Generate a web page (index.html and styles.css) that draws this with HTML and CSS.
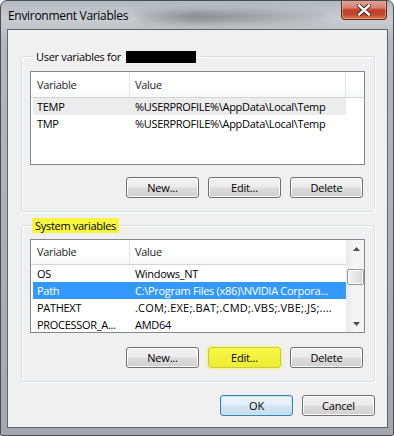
FILE: index.html
```html
<!DOCTYPE html>
<html>
<head>
<meta charset="utf-8">
<link rel="stylesheet" href="styles.css">
</head>
<body>
<div class="window">
  <div class="titlebar">
    <span class="title">Environment Variables</span>
    <div class="glass"></div>
    <div class="close">
      <svg width="14" height="12" viewBox="0 0 14 12">
        <path d="M2 1.5 L12 10.5 M12 1.5 L2 10.5" stroke="#3a1a14" stroke-width="4.2" stroke-linecap="square"/>
        <path d="M2 1.5 L12 10.5 M12 1.5 L2 10.5" stroke="#ffffff" stroke-width="2.4" stroke-linecap="square"/>
      </svg>
    </div>
  </div>
  <div class="client">
    <fieldset class="group group-user">
      <legend class="legend">User variables for <span class="redact"></span></legend>
      <div class="list list-user">
        <div class="lv-main">
          <div class="lv-header">
            <div class="hcol h1">Variable</div>
            <div class="hcol h2">Value</div>
            <div class="hcol hfill"></div>
          </div>
          <div class="row row-hover"><div class="c1">TEMP</div><div class="c2">%USERPROFILE%\AppData\Local\Temp</div></div>
          <div class="row"><div class="c1">TMP</div><div class="c2">%USERPROFILE%\AppData\Local\Temp</div></div>
        </div>
      </div>
      <div class="btnrow btnrow-user">
        <button class="btn">New...</button>
        <button class="btn">Edit...</button>
        <button class="btn">Delete</button>
      </div>
    </fieldset>
    <fieldset class="group group-sys">
      <legend class="legend legend-hl">System variables</legend>
      <div class="list list-sys">
        <div class="lv-main lv-main-sys">
          <div class="lv-header lv-header-sys">
            <div class="hcol h1">Variable</div>
            <div class="hcol h2">Value</div>
          </div>
          <div class="row"><div class="c1">OS</div><div class="c2">Windows_NT</div></div>
          <div class="row row-sel"><div class="c1">Path</div><div class="c2">C:\Program Files (x86)\NVIDIA Corpora...</div></div>
          <div class="row"><div class="c1">PATHEXT</div><div class="c2 wide">.COM;.EXE;.BAT;.CMD;.VBS;.VBE;.JS;....</div></div>
          <div class="row"><div class="c1">PROCESSOR_A...</div><div class="c2">AMD64</div></div>
        </div>
        <div class="scrollbar">
          <div class="sb-btn">
            <svg width="7" height="4" viewBox="0 0 7 4"><path d="M0 4 L3.5 0 L7 4 Z" fill="#4d4d4d"/></svg>
          </div>
          <div class="sb-thumb"></div>
          <div class="sb-space"></div>
          <div class="sb-btn">
            <svg width="7" height="4" viewBox="0 0 7 4"><path d="M0 0 L3.5 4 L7 0 Z" fill="#4d4d4d"/></svg>
          </div>
        </div>
      </div>
      <div class="btnrow btnrow-sys">
        <button class="btn">New...</button>
        <button class="btn btn-hl">Edit...</button>
        <button class="btn">Delete</button>
      </div>
    </fieldset>
    <div class="dlg-buttons">
      <button class="btn btn-default">OK</button>
      <button class="btn">Cancel</button>
    </div>
  </div>
</div>
</body>
</html>
```

FILE: styles.css
```css
* { box-sizing: border-box; }
html, body { margin: 0; padding: 0; background: #ffffff; }
body {
  font-family: "Open Sans", "Noto Sans", sans-serif;
  font-size: 11px;
  letter-spacing: -0.3px;
  color: #000;
}
.window {
  width: 394px;
  height: 436px;
  border: 1px solid #4a4d52;
  border-radius: 7px 7px 2px 2px;
  background: linear-gradient(to bottom, #b4b9bf 0px, #c9cdd1 18px, #b3b8be 40px, #a3a8ae 100%);
  padding: 0 5px 7px 6px;
  display: flex;
  flex-direction: column;
  overflow: hidden;
}
.titlebar {
  height: 28px;
  display: flex;
  align-items: flex-start;
}
.title {
  margin-top: 6px;
  margin-left: 1px;
  font-size: 12px;
  line-height: 18px;
  color: #000;
  white-space: nowrap;
}
.glass {
  flex: 1;
  height: 10px;
  margin: 11px 14px 0 10px;
  background: linear-gradient(to right, rgba(70,70,70,0.15), rgba(60,60,60,0.55) 30%, rgba(80,80,80,0.35) 70%, rgba(90,90,90,0.1));
  filter: blur(4px);
}
.close {
  width: 46px;
  height: 20px;
  margin-top: -1px;
  margin-right: 1px;
  border: 1px solid #5b2b24;
  border-top: none;
  border-radius: 0 0 4px 4px;
  background: linear-gradient(to bottom, #e5a595 0%, #d88472 40%, #c2412b 52%, #c0432b 75%, #e2794c 100%);
  box-shadow: inset 0 0 0 1px rgba(255,210,190,0.45);
  display: flex;
  align-items: center;
  justify-content: center;
}
.client {
  flex: 1;
  background: #f0f0f0;
  border: 1px solid #5f636a;
  display: flex;
  flex-direction: column;
  padding: 0 12px 0 13px;
}
.group {
  margin: 0;
  border: 1px solid #d5dfe5;
  border-radius: 3px;
  box-shadow: inset 1px 1px 0 #ffffff, 1px 1px 0 #ffffff;
  min-width: 0;
}
.group-user {
  margin-top: 19px;
  padding: 7px 9px 13px 8px;
}
.group-sys {
  margin-top: 6px;
  padding: 6px 9px 13px 8px;
}
.legend {
  padding: 0 3px;
  margin-left: 3px;
  line-height: 14px;
  height: 15px;
  display: flex;
  align-items: center;
}
.legend-hl {
  background: #f6f63c;
  margin-left: 2px;
  padding: 0 3px 0 3px;
}
.redact {
  display: inline-block;
  width: 70px;
  height: 12px;
  background: #000;
  margin-left: 5px;
}
.list {
  border: 1px solid #828790;
  background: #ffffff;
  display: flex;
  overflow: hidden;
}
.list-user { height: 94px; }
.list-sys { height: 94px; }
.lv-main {
  flex: 1;
  display: flex;
  flex-direction: column;
  overflow: hidden;
}
.lv-main-sys { flex: 0 0 315px; }
.lv-header {
  flex: 0 0 26px;
  display: flex;
  border-bottom: 1px solid #d5d5d5;
  background: linear-gradient(to bottom, #ffffff 0%, #ffffff 60%, #f7f8f9 100%);
}
.lv-header-sys { flex: 0 0 24px; }
.hcol {
  line-height: 24px;
  white-space: nowrap;
  color: #1e1e1e;
}
.lv-header:not(.lv-header-sys) .hcol { line-height: 25px; }
.h1 {
  width: 99px;
  padding-left: 6px;
  border-right: 1px solid #e3e5e8;
}
.h2 {
  width: 216px;
  padding-left: 5px;
  border-right: 1px solid #e3e5e8;
}
.hfill { flex: 1; }
.lv-main-sys .h2 { border-right: none; }
.row {
  flex: 0 0 17px;
  height: 17px;
  margin-left: 2px;
  width: 313px;
  display: flex;
  line-height: 17px;
  white-space: nowrap;
}
.row-hover { background: #ececec; }
.row-sel { background: #3399ff; color: #ffffff; }
.c1 {
  width: 97px;
  padding-left: 4px;
  overflow: hidden;
}
.c2 {
  flex: 1;
  padding-left: 5px;
  overflow: hidden;
}
.c2.wide { letter-spacing: 0.2px; }
.scrollbar {
  flex: 0 0 19px;
  display: flex;
  flex-direction: column;
  background: linear-gradient(to right, #eaeaea, #f6f6f6 40%, #f2f2f2);
  border-left: 1px solid #ededed;
}
.sb-btn {
  flex: 0 0 17px;
  display: flex;
  align-items: center;
  justify-content: center;
}
.sb-thumb {
  flex: 0 0 16px;
  margin: 12px 1px 0 0;
  border: 1px solid #979797;
  border-radius: 2px;
  background: linear-gradient(to right, #f4f4f4, #e6e6e6 50%, #d6d6d6);
  box-shadow: inset 0 0 0 1px #fafafa;
}
.sb-space { flex: 1; }
.btnrow {
  display: flex;
  justify-content: flex-end;
  gap: 9px;
  padding-right: 2px;
}
.btnrow-user { margin-top: 12px; }
.btnrow-sys { margin-top: 14px; }
.btn {
  width: 73px;
  height: 21px;
  padding: 0;
  margin: 0;
  border: 1px solid #707070;
  border-radius: 3px;
  background: linear-gradient(to bottom, #f2f2f2 0%, #ebebeb 48%, #dddddd 52%, #cfcfcf 100%);
  box-shadow: inset 0 0 0 1px #fbfbfb;
  font-family: "Open Sans", "Noto Sans", sans-serif;
  font-size: 11px;
  letter-spacing: -0.2px;
  color: #000;
  line-height: 19px;
}
.btn-hl {
  border-color: #c9c94a;
  background: linear-gradient(to bottom, #f8f84a 0%, #f2f23c 50%, #eded2f 100%);
  box-shadow: 0 0 2px 1px #f4f47a;
}
.btn-default {
  border-color: #3c7fb1;
  background: linear-gradient(to bottom, #eef6fb 0%, #e3eff7 48%, #d3e5f1 52%, #c6dcec 100%);
  box-shadow: inset 0 0 0 1px #c6e6f8;
}
.dlg-buttons {
  display: flex;
  justify-content: flex-end;
  gap: 9px;
  margin-top: 13px;
  padding-right: 0;
}
```
